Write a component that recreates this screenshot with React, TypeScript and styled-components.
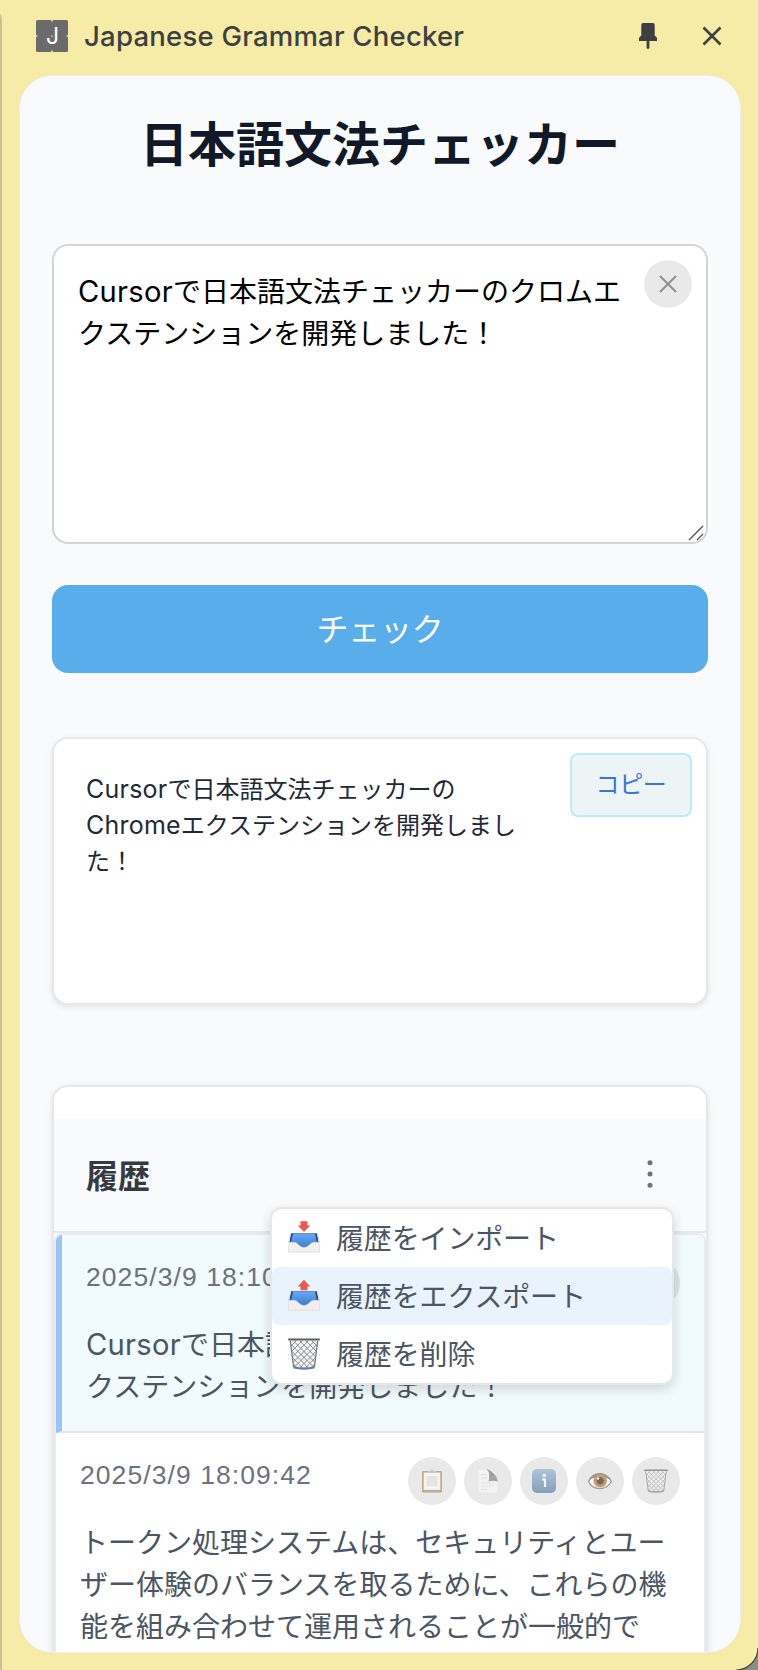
import React from "react";
import styled, { createGlobalStyle, css } from "styled-components";

const Global = createGlobalStyle`
  * { box-sizing: border-box; }
  body { margin: 0; background: #f6eba7; }
  button { font: inherit; border: 0; margin: 0; padding: 0; cursor: pointer; }
`;

const jp = `"Noto Sans CJK JP", sans-serif`;

const Frame = styled.div`
  position: relative;
  width: 758px;
  height: 1670px;
  overflow: hidden;
  background: #f6eba7;
  font-family: ${jp};
  display: flex;
  flex-direction: column;
`;
const LeftEdge = styled.div`
  position: absolute;
  left: 0;
  top: 14px;
  bottom: 0;
  width: 2px;
  background: #cdc08a;
  border-top-right-radius: 2px 8px;
`;
const Corner = styled.svg`
  position: absolute;
  right: 0;
  bottom: 0;
`;
const TitleBar = styled.header`
  height: 75px;
  flex: none;
  display: flex;
  align-items: center;
  padding: 0 30px 3px 36px;
`;
const AppIcon = styled.svg`
  flex: none;
  margin-right: 16px;
`;
const TitleText = styled.span`
  flex: 1;
  font: 500 27.5px/40px Inter, sans-serif;
  color: #3c4043;
  white-space: nowrap;
  letter-spacing: 0.23px;
`;
const BarButton = styled.button`
  width: 32px;
  height: 32px;
  margin-left: 32px;
  background: none;
  display: grid;
  place-items: center;
`;
const Panel = styled.main`
  margin-left: 19px;
  width: 722px;
  height: 1578px;
  flex: none;
  overflow: hidden;
  border-radius: 33px;
  border: 1px solid #eceef0;
  background: #f9fafc;
  padding: 29px 32px 0;
  display: flex;
  flex-direction: column;
`;
const Heading = styled.h1`
  margin: 0 0 67px;
  font-size: 48px;
  line-height: 72px;
  font-weight: 700;
  text-align: center;
  color: #111827;
`;
const InputBox = styled.div`
  position: relative;
  flex: none;
  height: 300px;
  padding: 23px 24px;
  border: 2px solid #d1d5db;
  border-radius: 16px;
  background: #fff;
  color: #000;
`;
const Body = styled.p<{ $small?: boolean }>`
  margin: 0;
  white-space: nowrap;
  font-size: ${(p) => (p.$small ? 24 : 28)}px;
  line-height: ${(p) => (p.$small ? 36 : 42)}px;
`;
const Latin = styled.span`
  font-family: Inter, sans-serif;
  font-size: 1.04em;
  line-height: 1;
  letter-spacing: 0.01em;
`;
const round = css`
  width: 48px;
  height: 48px;
  border-radius: 50%;
  background: rgba(0, 0, 0, 0.088);
  display: grid;
  place-items: center;
`;
const ClearButton = styled.button`
  ${round}
  position: absolute;
  top: 14px;
  right: 14px;
`;
const Grip = styled.svg`
  position: absolute;
  right: 1px;
  bottom: 0;
`;
const CheckButton = styled.button`
  flex: none;
  height: 88px;
  margin: 41px 0 64px;
  padding-bottom: 4px;
  border-radius: 16px;
  background: #5aadeb;
  color: #fff;
  font-size: 32px;
  line-height: 48px;
  letter-spacing: -0.3px;
`;
const card = css`
  flex: none;
  border: 2px solid #e5e7eb;
  border-radius: 16px;
  background: #fff;
  box-shadow: 0 2px 6px rgba(0, 0, 0, 0.1);
`;
const ResultCard = styled.section`
  ${card}
  position: relative;
  height: 268px;
  padding: 31px 32px;
  color: #1f2937;
`;
const CopyButton = styled.button`
  position: absolute;
  top: 14px;
  right: 14px;
  width: 122px;
  height: 64px;
  border: 2px solid #bee9f6;
  border-radius: 8px;
  background: #edf4f6;
  color: #3b74d6;
  font-size: 24px;
  line-height: 36px;
  padding-bottom: 4px;
  letter-spacing: -0.4px;
`;
const HistoryCard = styled.section`
  ${card}
  position: relative;
  margin-top: 80px;
  height: 640px;
  padding-top: 32px;
`;
const HistoryHeader = styled.div`
  height: 114px;
  padding: 0 32px 3px;
  border-bottom: 2px solid #e5e7eb;
  background: #f9fafc;
  display: flex;
  align-items: center;
  justify-content: space-between;
`;
const HistoryTitle = styled.h2`
  margin: 0;
  font-size: 32px;
  line-height: 48px;
  font-weight: 700;
  color: #343a40;
`;
const MoreButton = styled.button`
  width: 48px;
  height: 48px;
  background: none;
  display: grid;
  place-items: center;
`;
const List = styled.div`
  height: 600px;
  border: 2px solid #e8eaed;
  border-radius: 8px 8px 0 0;
  overflow: hidden;
`;
const Entry = styled.article<{ $active?: boolean }>`
  padding: 24px;
  border-bottom: 2px solid #e5e7eb;
  color: #4b5563;
  ${(p) => p.$active && `background: #f1fafc; border-left: 6px solid #9cc3f7;`}
`;
const EntryTop = styled.div`
  display: flex;
  justify-content: space-between;
  align-items: flex-start;
  height: 48px;
  margin-bottom: 15px;
  & + p { margin-bottom: 1px; }
`;
const DateText = styled.time`
  font: 26.5px/36px "Liberation Sans", sans-serif;
  letter-spacing: 1.07px;
  color: #6b7280;
  white-space: nowrap;
`;
const Actions = styled.div`
  display: flex;
  gap: 8px;
`;
const ActionButton = styled.button`
  ${round}
  svg { opacity: 0.6; }
`;
const Menu = styled.div`
  position: absolute;
  top: 120px;
  right: 32px;
  width: 404px;
  height: 178px;
  border: 2px solid #e5e7eb;
  border-radius: 12px;
  background: #fff;
  box-shadow: 0 4px 12px rgba(0, 0, 0, 0.15);
`;
const MenuItem = styled.button<{ $hover?: boolean }>`
  display: flex;
  align-items: center;
  width: 100%;
  height: 58px;
  padding: 0 16px;
  gap: 16px;
  border-radius: 8px;
  background: ${(p) => (p.$hover ? "#e8f3fb" : "transparent")};
  color: #4b5563;
  font-size: 28px;
  line-height: 42px;
  letter-spacing: -0.15px;
  text-align: left;
`;
const MenuLabel = styled.span`
  padding-bottom: 3px;
`;

const Tray = ({ up }: { up?: boolean }) => (
  <svg width="32" height="36" viewBox="0 0 32 36">
    <defs>
      <linearGradient id="trayBlue" x1="0" y1="0" x2="0" y2="1">
        <stop offset="0" stopColor="#68a8f5" />
        <stop offset="1" stopColor="#3a78c8" />
      </linearGradient>
    </defs>
    <path d="M2.800 13.200h26.400L31 24H1z" fill="#274f80" />
    <path d="M5.200 13.600h21.600l2 8.400-6 7H9l-5.800-7z" fill="url(#trayBlue)" />
    <path d="M2.800 13.200.6 22.500M29.200 13.200l2.200 9.300" stroke="#dcdcda" strokeWidth="1" />
    <path d="M.3 22.300h6c3.400 0 4.800 5.200 9.700 5.200s6.300-5.200 9.700-5.200h6v9c0 .6-.3.900-.8.900H1.100c-.5 0-.8-.3-.8-.9z" fill="#f1f0ee" stroke="#d4d3d0" strokeWidth=".6" />
    {up ? (
      <path d="M16 1.800 22.200 8.500h-2.700v3.800h-7V8.500H9.800z" fill="#e85c4d" />
    ) : (
      <path d="M12.500 1.300h7v4.200h2.700L16 12 9.800 5.500h2.700z" fill="#e85c4d" />
    )}
  </svg>
);

const Basket = ({ size }: { size: number }) => (
  <svg width={size} height={size} viewBox="0 0 32 32">
    <path d="M2 2.500h28l-3.600 27.500c-5 1.600-15.800 1.600-20.800 0z" fill="#f4f4f5" />
    <g stroke="#777b80" strokeWidth=".85" fill="none">
      <path d="M3 8 8 3M3.500 13.500 14 3M4.300 19 20 3M5 24.500 26 3.500M6 29.500 29 6.500M11 30.500 28 13.500M17 30.500 27 20M23 30 26.500 26" />
      <path d="M29 8 24 3M28.500 13.500 18 3M27.700 19 12 3M27 24.500 6 3.500M26 29.500 3 6.500M21 30.500 4 13.500M15 30.500 5 20M9 30 5.500 26" />
      <path d="M2.300 3 5.600 29M29.700 3 26.400 29" strokeWidth="1.300" />
    </g>
    <path d="M1 1.500h30" stroke="#555e68" strokeWidth="2" strokeLinecap="round" />
    <path d="M5.600 29.300c5 1.700 15.800 1.700 20.800 0" stroke="#64809c" strokeWidth="2.200" fill="none" />
  </svg>
);

const Clipboard = () => (
  <svg width="24" height="24" viewBox="0 0 24 24">
    <rect x="2" y="2" width="20" height="21.500" rx="1.200" fill="#b98032" />
    <rect x="3.700" y="3.600" width="16.600" height="17.900" fill="#fdfdfd" />
    <path d="M6.500 7h11v10.500h-11z" fill="#e0e2e3" />
    <path d="M3.700 20.800h16.600v1.200H3.700z" fill="#8a8f96" />
    <path d="M8 3.700V2h2.300a1.800 1.800 0 0 1 3.400 0H16v1.700z" fill="#a9b6c4" />
  </svg>
);

const Page = () => (
  <svg width="24" height="24" viewBox="0 0 24 24">
    <path d="M2.500.5H12l9.500 11v12h-19z" fill="#fbfbfb" />
    <path d="M5 5.500h5M5 9h6M5 14h13M5 17h13M5 20.500h6" stroke="#dcdcdc" strokeWidth="1" />
    <path d="M9.500.3c3 1 4.200 3.500 3.500 6.800 3-.3 7.200.2 8.700 5.700C22.200 8 14.700.3 9.500.3z" fill="#6b6b6b" />
    <path d="M13 7.100c3-.3 7.200.2 8.700 5.700-3-1.500-6.500-1-9.300-.2.800-2 .9-4 .6-5.500z" fill="#747474" />
  </svg>
);

const Info = () => (
  <svg width="24" height="24" viewBox="0 0 24 24">
    <defs>
      <linearGradient id="infoBlue" x1="0" y1="0" x2="0" y2="1">
        <stop offset="0" stopColor="#86acd2" />
        <stop offset="1" stopColor="#456f99" />
      </linearGradient>
    </defs>
    <rect width="24" height="24" rx="5" fill="url(#infoBlue)" />
    <circle cx="12.200" cy="6.500" r="1.700" fill="#fff" />
    <path d="M10 10.500h3V18" stroke="#fff" strokeWidth="2.200" fill="none" />
  </svg>
);

const Eye = () => (
  <svg width="26" height="24" viewBox="0 0 26 24">
    <path d="M1.500 12.500C5.500 5 18 2 24.500 12.500 19 22 6 22 1.500 12.500z" fill="#fff" stroke="#70605c" strokeWidth="1.200" />
    <path d="M1.200 12C5.500 2.500 18 .5 24.800 12 18 6 8 6 1.200 12z" fill="#67544f" />
    <circle cx="13.200" cy="11.800" r="6.800" fill="#a5711d" />
    <circle cx="13.200" cy="11.800" r="3.600" fill="#2b1508" />
    <circle cx="11" cy="9.500" r="1.200" fill="#fff" />
  </svg>
);

const EntryActions = () => (
  <Actions>
    <ActionButton aria-label="copy"><Clipboard /></ActionButton>
    <ActionButton aria-label="page"><Page /></ActionButton>
    <ActionButton aria-label="info"><Info /></ActionButton>
    <ActionButton aria-label="view"><Eye /></ActionButton>
    <ActionButton aria-label="delete"><Basket size={24} /></ActionButton>
  </Actions>
);

export default function App() {
  return (
    <Frame>
      <Global />
      <LeftEdge />
      <TitleBar>
        <AppIcon width="32" height="32" viewBox="0 0 32 32">
          <rect width="32" height="32" rx="1.500" fill="#6b6b6b" />
          <path d="M15 .7h2M15 31.300h2M.7 15v2M31.300 15v2M15.200 16h1.600" stroke="#d8c98a" strokeWidth="1.400" />
          <text x="16.500" y="24" textAnchor="middle" fontFamily="Inter, sans-serif" fontSize="23" fill="#fff">J</text>
        </AppIcon>
        <TitleText>Japanese Grammar Checker</TitleText>
        <BarButton aria-label="pin">
          <svg width="20" height="28" viewBox="0 0 20 28">
            <path d="M5 1h10q1.700 0 1.700 1.700V13.500l2.300 2.300V19H1v-3.200l2.300-2.300V2.700Q3.300 1 5 1zM8.600 19h2.800v7L10 27.200 8.600 26z" fill="#3c4043" />
          </svg>
        </BarButton>
        <BarButton aria-label="close">
          <svg width="20" height="20" viewBox="0 0 20 20">
            <path d="M1.500 1.500l17 17M18.500 1.500l-17 17" stroke="#3c4043" strokeWidth="2.600" />
          </svg>
        </BarButton>
      </TitleBar>
      <Panel>
        <Heading>日本語文法チェッカー</Heading>
        <InputBox>
          <Body><Latin>Cursor</Latin>で日本語文法チェッカーのクロムエ<br />クステンションを開発しました！</Body>
          <ClearButton aria-label="clear">
            <svg width="18" height="18" viewBox="0 0 18 18">
              <path d="M1 1l16 16M17 1L1 17" stroke="#8f8f8f" strokeWidth="2" />
            </svg>
          </ClearButton>
          <Grip width="18" height="18" viewBox="0 0 18 18">
            <path d="M2 16 16 2M10 16l6-6" stroke="#555" strokeWidth="1.400" />
          </Grip>
        </InputBox>
        <CheckButton>チェック</CheckButton>
        <ResultCard>
          <Body $small>
            <Latin>Cursor</Latin>で日本語文法チェッカーの<br />
            <Latin>Chrome</Latin>エクステンションを開発しまし<br />
            た！
          </Body>
          <CopyButton>コピー</CopyButton>
        </ResultCard>
        <HistoryCard>
          <HistoryHeader>
            <HistoryTitle>履歴</HistoryTitle>
            <MoreButton aria-label="more">
              <svg width="6" height="30" viewBox="0 0 6 30" fill="#6b7280">
                <circle cx="3" cy="3.700" r="2.500" />
                <circle cx="3" cy="15" r="2.500" />
                <circle cx="3" cy="26.200" r="2.500" />
              </svg>
            </MoreButton>
          </HistoryHeader>
          <List>
            <Entry $active>
              <EntryTop>
                <DateText>2025/3/9 18:10</DateText>
                <EntryActions />
              </EntryTop>
              <Body><Latin>Cursor</Latin>で日本語文法チェッカーのクロムエ<br />クステンションを開発しました！</Body>
            </Entry>
            <Entry>
              <EntryTop>
                <DateText>2025/3/9 18:09:42</DateText>
                <EntryActions />
              </EntryTop>
              <Body>
                トークン処理システムは、セキュリティとユー<br />
                ザー体験のバランスを取るために、これらの機<br />
                能を組み合わせて運用されることが一般的で
              </Body>
            </Entry>
          </List>
          <Menu>
            <MenuItem><Tray /><MenuLabel>履歴をインポート</MenuLabel></MenuItem>
            <MenuItem $hover><Tray up /><MenuLabel>履歴をエクスポート</MenuLabel></MenuItem>
            <MenuItem><Basket size={32} /><MenuLabel>履歴を削除</MenuLabel></MenuItem>
          </Menu>
        </HistoryCard>
      </Panel>
      <Corner width="22" height="22" viewBox="0 0 22 22">
        <path d="M22 0v22H0C12 22 22 12 22 0z" fill="#8c8c88" />
        <path d="M22 0C22 12 12 22 0 22" fill="none" stroke="#4b4838" strokeWidth="1.200" />
      </Corner>
    </Frame>
  );
}
